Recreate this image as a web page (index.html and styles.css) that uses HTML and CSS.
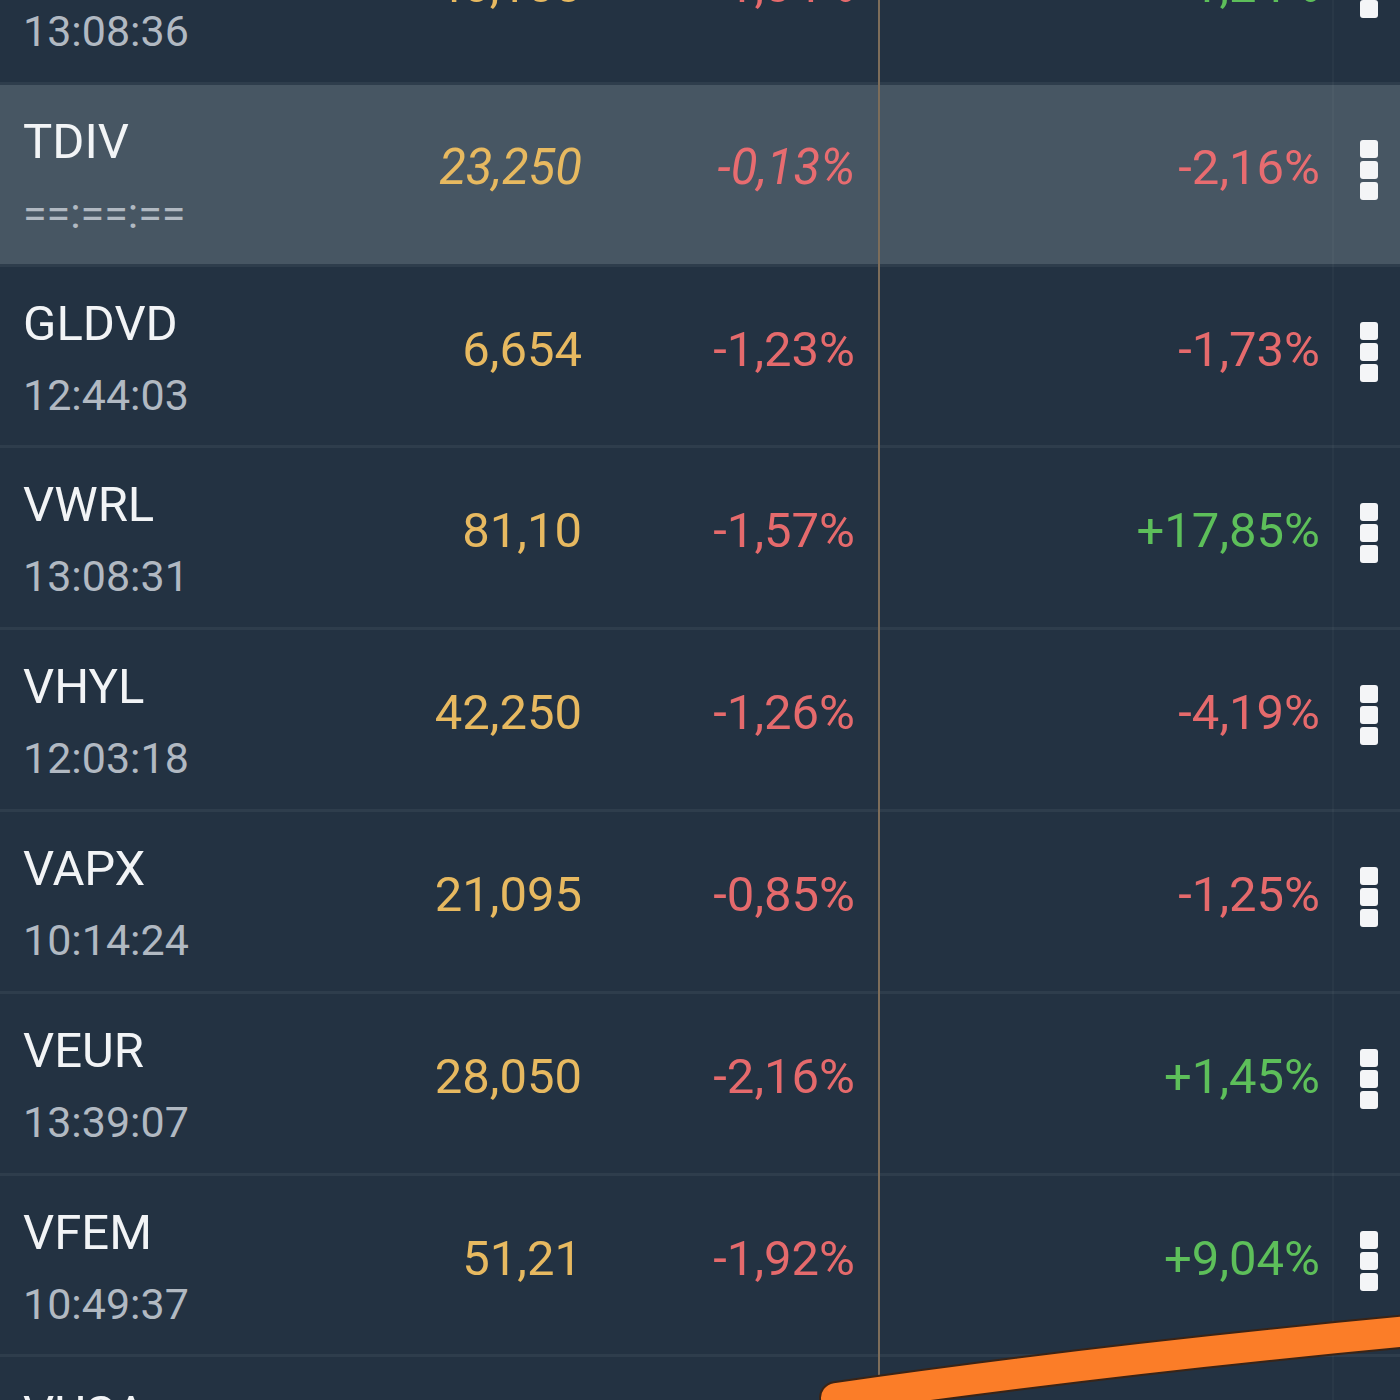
FILE: index.html
```html
<!DOCTYPE html>
<html lang="nl">
<head>
    <meta charset="UTF-8">
    <meta name="viewport" content="width=device-width, initial-scale=1.0">
    <title>Watchlist</title>
    <link rel="stylesheet" href="styles.css">
</head>
<body>
    <div class="watchlist">
        <div class="row">
            <div class="name"><span class="ticker">IWDA</span><span class="time">13:08:36</span></div>
            <div class="price">46,100</div>
            <div class="change down">-1,04%</div>
            <div class="total up">+1,24%</div>
            <div class="menu"><span></span><span></span><span></span></div>
        </div>
        <div class="row active">
            <div class="name"><span class="ticker">TDIV</span><span class="time">==:==:==</span></div>
            <div class="price stale">23,250</div>
            <div class="change down stale">-0,13%</div>
            <div class="total down">-2,16%</div>
            <div class="menu"><span></span><span></span><span></span></div>
        </div>
        <div class="row">
            <div class="name"><span class="ticker">GLDVD</span><span class="time">12:44:03</span></div>
            <div class="price">6,654</div>
            <div class="change down">-1,23%</div>
            <div class="total down">-1,73%</div>
            <div class="menu"><span></span><span></span><span></span></div>
        </div>
        <div class="row">
            <div class="name"><span class="ticker">VWRL</span><span class="time">13:08:31</span></div>
            <div class="price">81,10</div>
            <div class="change down">-1,57%</div>
            <div class="total up">+17,85%</div>
            <div class="menu"><span></span><span></span><span></span></div>
        </div>
        <div class="row">
            <div class="name"><span class="ticker">VHYL</span><span class="time">12:03:18</span></div>
            <div class="price">42,250</div>
            <div class="change down">-1,26%</div>
            <div class="total down">-4,19%</div>
            <div class="menu"><span></span><span></span><span></span></div>
        </div>
        <div class="row">
            <div class="name"><span class="ticker">VAPX</span><span class="time">10:14:24</span></div>
            <div class="price">21,095</div>
            <div class="change down">-0,85%</div>
            <div class="total down">-1,25%</div>
            <div class="menu"><span></span><span></span><span></span></div>
        </div>
        <div class="row">
            <div class="name"><span class="ticker">VEUR</span><span class="time">13:39:07</span></div>
            <div class="price">28,050</div>
            <div class="change down">-2,16%</div>
            <div class="total up">+1,45%</div>
            <div class="menu"><span></span><span></span><span></span></div>
        </div>
        <div class="row">
            <div class="name"><span class="ticker">VFEM</span><span class="time">10:49:37</span></div>
            <div class="price">51,21</div>
            <div class="change down">-1,92%</div>
            <div class="total up">+9,04%</div>
            <div class="menu"><span></span><span></span><span></span></div>
        </div>
        <div class="row">
            <div class="name"><span class="ticker">VUSA</span><span class="time">13:08:40</span></div>
            <div class="price">56,870</div>
            <div class="change down">-1,12%</div>
            <div class="total up">+11,30%</div>
            <div class="menu"><span></span><span></span><span></span></div>
        </div>

        <div class="divider"></div>
        <div class="divider menu-line"></div>
    </div>

    <svg class="scribble" width="1400" height="1400" viewBox="0 0 1400 1400">
        <path d="M836 1398 Q1100 1360 1410 1331" fill="none" stroke="#3a2416" stroke-width="34" stroke-linecap="round"/>
        <path d="M836 1398 Q1100 1360 1410 1331" fill="none" stroke="#fb7d28" stroke-width="30" stroke-linecap="round"/>
    </svg>
</body>
</html>
```

FILE: styles.css
```css
body {
    margin: 0;
    padding: 0;
    background-color: #233242;
    font-family: Roboto, "Liberation Sans", sans-serif;
    height: 1400px;
    overflow: hidden;
    position: relative;
}
.watchlist {
    position: relative;
    margin-top: -97px;
}
.row {
    display: grid;
    grid-template-columns: 400px 182px 273px 465px 80px;
    height: 181.8px;
    box-sizing: border-box;
    border-bottom: 3px solid #2e3d4c;
    background-color: #233242;
}
.row.active {
    background-color: #475663;
}
.name {
    display: flex;
    flex-direction: column;
    padding: 29px 0 0 23px;
}
.ticker {
    font-size: 49px;
    line-height: 56px;
    color: #f2f4f6;
}
.time {
    font-size: 43px;
    line-height: 50px;
    margin-top: 18px;
    color: #b1b9c2;
}
.price, .change, .total {
    font-size: 49px;
    line-height: 56px;
    padding-top: 55px;
    text-align: right;
}
.price {
    color: #e7b960;
}
.down {
    color: #e56a6c;
}
.up {
    color: #5dbf5a;
}
.stale {
    font-style: italic;
}
.row.active .down {
    color: #e86c70;
}
.menu {
    display: flex;
    flex-direction: column;
    gap: 3px;
    padding: 55px 0 0 40px;
}
.menu span {
    width: 18px;
    height: 18px;
    border-radius: 3px;
    background-color: #f4f5f7;
}
.divider {
    position: absolute;
    top: 0;
    bottom: 0;
    left: 878px;
    width: 2px;
    background-color: #7d6d5a;
}
.divider.menu-line {
    left: 1332px;
    background-color: rgba(255, 255, 255, 0.03);
}
.scribble {
    position: absolute;
    top: 0;
    left: 0;
}
```
